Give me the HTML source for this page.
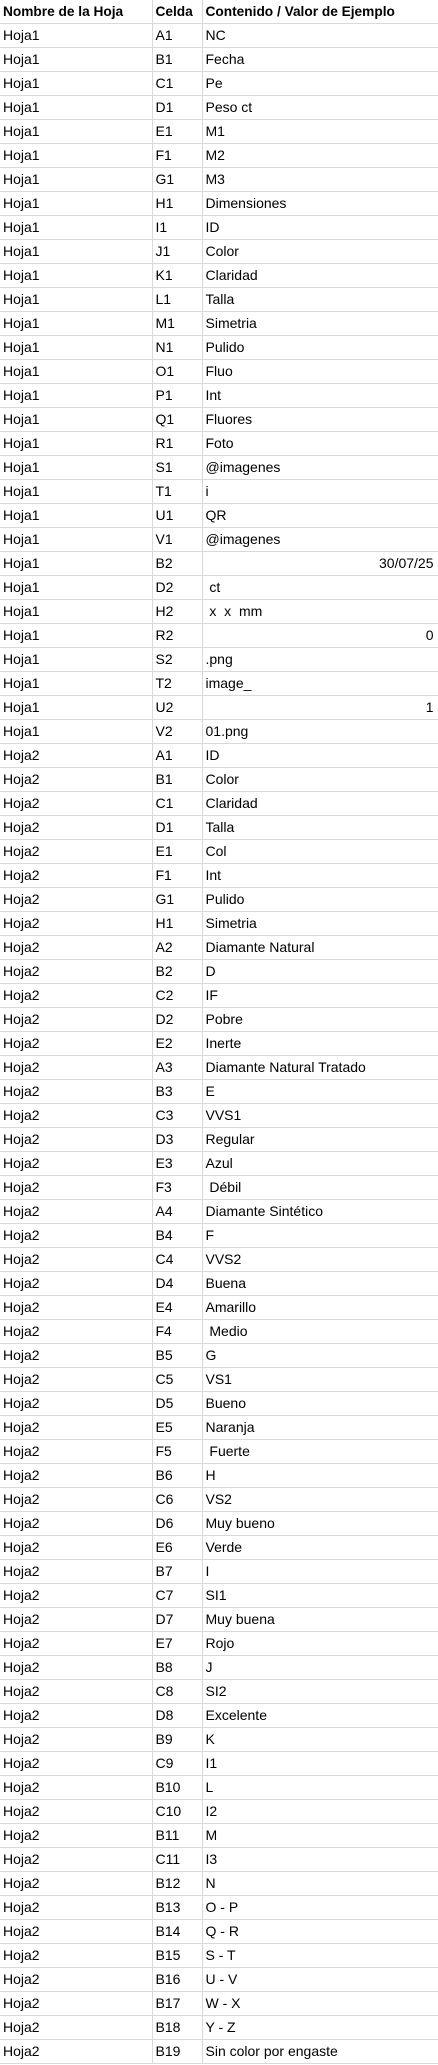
<!DOCTYPE html>
<html><head><meta charset="utf-8"><style>
html,body{margin:0;padding:0;background:#fff;}
body{width:438px;height:2065px;overflow:hidden;}
table{border-collapse:collapse;table-layout:fixed;width:438px;font-family:"Liberation Sans",sans-serif;font-size:14px;color:#000;}
td{border:1px solid #d9d9d9;height:23px;padding:0 0 0 3px;white-space:pre;overflow:hidden;line-height:23px;}
tr:first-child td{font-weight:bold;font-size:13.7px;border-top:none;}
td:first-child{border-left:none;}
td.r{text-align:right;padding-right:4px;}
</style></head><body>
<table>
<colgroup><col style="width:152px"><col style="width:50px"><col style="width:236px"></colgroup>
<tr><td>Nombre de la Hoja</td><td>Celda</td><td>Contenido / Valor de Ejemplo</td></tr>
<tr><td>Hoja1</td><td>A1</td><td>NC</td></tr>
<tr><td>Hoja1</td><td>B1</td><td>Fecha</td></tr>
<tr><td>Hoja1</td><td>C1</td><td>Pe</td></tr>
<tr><td>Hoja1</td><td>D1</td><td>Peso ct</td></tr>
<tr><td>Hoja1</td><td>E1</td><td>M1</td></tr>
<tr><td>Hoja1</td><td>F1</td><td>M2</td></tr>
<tr><td>Hoja1</td><td>G1</td><td>M3</td></tr>
<tr><td>Hoja1</td><td>H1</td><td>Dimensiones</td></tr>
<tr><td>Hoja1</td><td>I1</td><td>ID</td></tr>
<tr><td>Hoja1</td><td>J1</td><td>Color</td></tr>
<tr><td>Hoja1</td><td>K1</td><td>Claridad</td></tr>
<tr><td>Hoja1</td><td>L1</td><td>Talla</td></tr>
<tr><td>Hoja1</td><td>M1</td><td>Simetria</td></tr>
<tr><td>Hoja1</td><td>N1</td><td>Pulido</td></tr>
<tr><td>Hoja1</td><td>O1</td><td>Fluo</td></tr>
<tr><td>Hoja1</td><td>P1</td><td>Int</td></tr>
<tr><td>Hoja1</td><td>Q1</td><td>Fluores</td></tr>
<tr><td>Hoja1</td><td>R1</td><td>Foto</td></tr>
<tr><td>Hoja1</td><td>S1</td><td>@imagenes</td></tr>
<tr><td>Hoja1</td><td>T1</td><td>i</td></tr>
<tr><td>Hoja1</td><td>U1</td><td>QR</td></tr>
<tr><td>Hoja1</td><td>V1</td><td>@imagenes</td></tr>
<tr><td>Hoja1</td><td>B2</td><td class="r">30/07/25</td></tr>
<tr><td>Hoja1</td><td>D2</td><td> ct</td></tr>
<tr><td>Hoja1</td><td>H2</td><td> x  x  mm</td></tr>
<tr><td>Hoja1</td><td>R2</td><td class="r">0</td></tr>
<tr><td>Hoja1</td><td>S2</td><td>.png</td></tr>
<tr><td>Hoja1</td><td>T2</td><td>image_</td></tr>
<tr><td>Hoja1</td><td>U2</td><td class="r">1</td></tr>
<tr><td>Hoja1</td><td>V2</td><td>01.png</td></tr>
<tr><td>Hoja2</td><td>A1</td><td>ID</td></tr>
<tr><td>Hoja2</td><td>B1</td><td>Color</td></tr>
<tr><td>Hoja2</td><td>C1</td><td>Claridad</td></tr>
<tr><td>Hoja2</td><td>D1</td><td>Talla</td></tr>
<tr><td>Hoja2</td><td>E1</td><td>Col</td></tr>
<tr><td>Hoja2</td><td>F1</td><td>Int</td></tr>
<tr><td>Hoja2</td><td>G1</td><td>Pulido</td></tr>
<tr><td>Hoja2</td><td>H1</td><td>Simetria</td></tr>
<tr><td>Hoja2</td><td>A2</td><td>Diamante Natural</td></tr>
<tr><td>Hoja2</td><td>B2</td><td>D</td></tr>
<tr><td>Hoja2</td><td>C2</td><td>IF</td></tr>
<tr><td>Hoja2</td><td>D2</td><td>Pobre</td></tr>
<tr><td>Hoja2</td><td>E2</td><td>Inerte</td></tr>
<tr><td>Hoja2</td><td>A3</td><td>Diamante Natural Tratado</td></tr>
<tr><td>Hoja2</td><td>B3</td><td>E</td></tr>
<tr><td>Hoja2</td><td>C3</td><td>VVS1</td></tr>
<tr><td>Hoja2</td><td>D3</td><td>Regular</td></tr>
<tr><td>Hoja2</td><td>E3</td><td>Azul</td></tr>
<tr><td>Hoja2</td><td>F3</td><td> Débil</td></tr>
<tr><td>Hoja2</td><td>A4</td><td>Diamante Sintético</td></tr>
<tr><td>Hoja2</td><td>B4</td><td>F</td></tr>
<tr><td>Hoja2</td><td>C4</td><td>VVS2</td></tr>
<tr><td>Hoja2</td><td>D4</td><td>Buena</td></tr>
<tr><td>Hoja2</td><td>E4</td><td>Amarillo</td></tr>
<tr><td>Hoja2</td><td>F4</td><td> Medio</td></tr>
<tr><td>Hoja2</td><td>B5</td><td>G</td></tr>
<tr><td>Hoja2</td><td>C5</td><td>VS1</td></tr>
<tr><td>Hoja2</td><td>D5</td><td>Bueno</td></tr>
<tr><td>Hoja2</td><td>E5</td><td>Naranja</td></tr>
<tr><td>Hoja2</td><td>F5</td><td> Fuerte</td></tr>
<tr><td>Hoja2</td><td>B6</td><td>H</td></tr>
<tr><td>Hoja2</td><td>C6</td><td>VS2</td></tr>
<tr><td>Hoja2</td><td>D6</td><td>Muy bueno</td></tr>
<tr><td>Hoja2</td><td>E6</td><td>Verde</td></tr>
<tr><td>Hoja2</td><td>B7</td><td>I</td></tr>
<tr><td>Hoja2</td><td>C7</td><td>SI1</td></tr>
<tr><td>Hoja2</td><td>D7</td><td>Muy buena</td></tr>
<tr><td>Hoja2</td><td>E7</td><td>Rojo</td></tr>
<tr><td>Hoja2</td><td>B8</td><td>J</td></tr>
<tr><td>Hoja2</td><td>C8</td><td>SI2</td></tr>
<tr><td>Hoja2</td><td>D8</td><td>Excelente</td></tr>
<tr><td>Hoja2</td><td>B9</td><td>K</td></tr>
<tr><td>Hoja2</td><td>C9</td><td>I1</td></tr>
<tr><td>Hoja2</td><td>B10</td><td>L</td></tr>
<tr><td>Hoja2</td><td>C10</td><td>I2</td></tr>
<tr><td>Hoja2</td><td>B11</td><td>M</td></tr>
<tr><td>Hoja2</td><td>C11</td><td>I3</td></tr>
<tr><td>Hoja2</td><td>B12</td><td>N</td></tr>
<tr><td>Hoja2</td><td>B13</td><td>O - P</td></tr>
<tr><td>Hoja2</td><td>B14</td><td>Q - R</td></tr>
<tr><td>Hoja2</td><td>B15</td><td>S - T</td></tr>
<tr><td>Hoja2</td><td>B16</td><td>U - V</td></tr>
<tr><td>Hoja2</td><td>B17</td><td>W - X</td></tr>
<tr><td>Hoja2</td><td>B18</td><td>Y - Z</td></tr>
<tr><td>Hoja2</td><td>B19</td><td>Sin color por engaste</td></tr>
</table>
</body></html>
